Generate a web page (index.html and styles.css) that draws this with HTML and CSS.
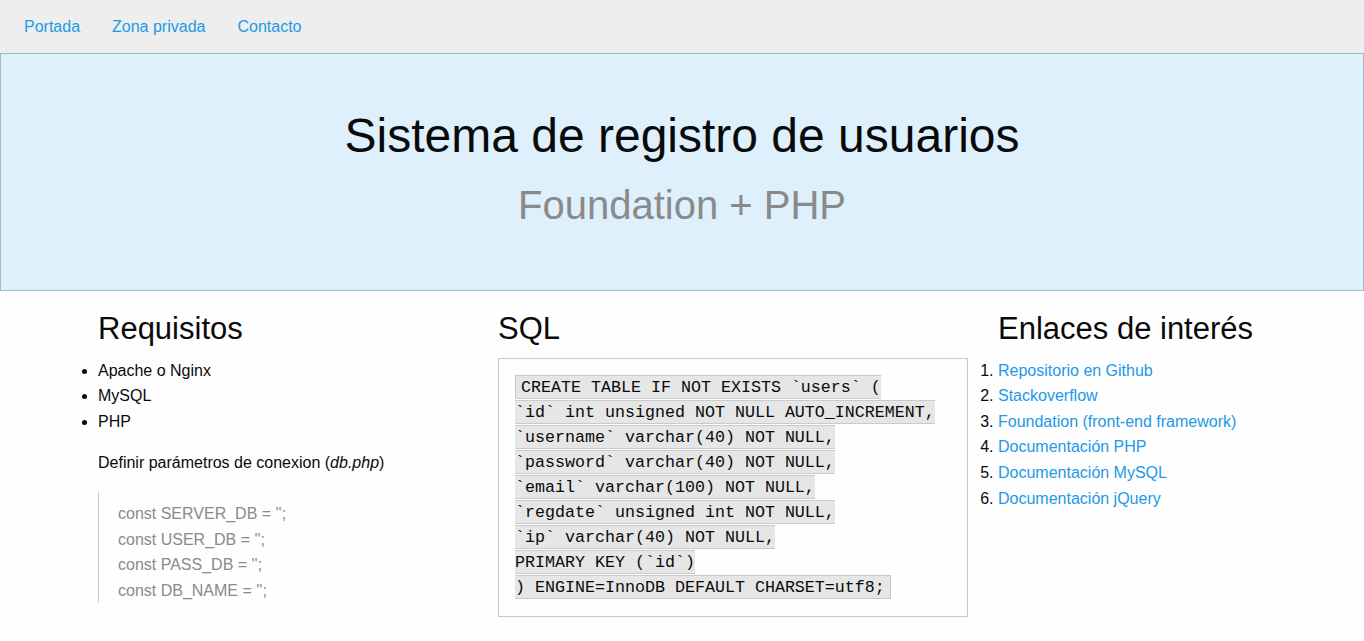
FILE: index.html
```html
<!DOCTYPE html>
<html lang="es">
<head>
<meta charset="utf-8">
<title>Sistema de registro de usuarios</title>
<link rel="stylesheet" href="styles.css">
</head>
<body>
<div class="top-bar">
  <ul class="menu">
    <li><a href="#">Portada</a></li>
    <li><a href="#">Zona privada</a></li>
    <li><a href="#">Contacto</a></li>
  </ul>
</div>
<div class="callout">
  <h1>Sistema de registro de usuarios</h1>
  <h2 class="subheader">Foundation + PHP</h2>
</div>
<div class="row">
  <div class="col col-4">
    <h3>Requisitos</h3>
    <ul class="plain">
      <li>Apache o Nginx</li>
      <li>MySQL</li>
      <li>PHP</li>
    </ul>
    <p>Definir parámetros de conexion (<em>db.php</em>)</p>
    <blockquote><p>const SERVER_DB = '';<br>const USER_DB = '';<br>const PASS_DB = '';<br>const DB_NAME = '';</p></blockquote>
  </div>
  <div class="col col-5">
    <h3>SQL</h3>
    <div class="sqlbox"><code>CREATE TABLE IF NOT EXISTS `users` (
`id` int unsigned NOT NULL AUTO_INCREMENT,
`username` varchar(40) NOT NULL,
`password` varchar(40) NOT NULL,
`email` varchar(100) NOT NULL,
`regdate` unsigned int NOT NULL,
`ip` varchar(40) NOT NULL,
PRIMARY KEY (`id`)
) ENGINE=InnoDB DEFAULT CHARSET=utf8;</code></div>
  </div>
  <div class="col col-3">
    <h3>Enlaces de interés</h3>
    <ol class="plain">
      <li><a href="#">Repositorio en Github</a></li>
      <li><a href="#">Stackoverflow</a></li>
      <li><a href="#">Foundation (front-end framework)</a></li>
      <li><a href="#">Documentación PHP</a></li>
      <li><a href="#">Documentación MySQL</a></li>
      <li><a href="#">Documentación jQuery</a></li>
    </ol>
  </div>
</div>
</body>
</html>
```

FILE: styles.css
```css
* { box-sizing: border-box; }
html, body {
  margin: 0;
  padding: 0;
  background: #fefefe;
  color: #0a0a0a;
  font-family: "Liberation Sans", Arial, sans-serif;
  font-size: 16px;
  line-height: 1.5;
}
a { color: #2199e8; text-decoration: none; }

.top-bar {
  background: #eeeeee;
  padding: 8px;
}
.menu {
  display: flex;
  list-style: none;
  margin: 0;
  padding: 0;
}
.menu a {
  display: block;
  line-height: 1;
  padding: 10.5px 16px;
}

.callout {
  background: #def0fc;
  border: 1px solid rgba(10, 10, 10, 0.25);
  padding: 48px 16px 49px;
  margin: 0 0 15.5px;
  text-align: center;
}
h1, h2, h3 {
  font-weight: normal;
  line-height: 1.4;
  margin: 0 0 8px;
}
h1 { font-size: 48px; }
h2 { font-size: 40px; }
.subheader { color: #8a8a8a; margin: 0 0 8px; }
h3 { font-size: 31px; margin-bottom: 7.5px; }

.row {
  max-width: 1200px;
  margin: 0 auto;
  display: flex;
}
.col { padding: 0 14px 0 16px; }
.col-4 { width: 400px; }
.col-5 { width: 500px; }
.col-3 { width: 300px; }

p { margin: 0 0 16px; line-height: 1.6; }
ul.plain, ol.plain {
  margin: 0 0 16px;
  padding: 0;
  line-height: 1.6;
  list-style-position: outside;
}

blockquote {
  margin: 0 0 16px;
  padding: 9px 20px 0 19px;
  border-left: 1px solid #cacaca;
}
blockquote p { color: #8a8a8a; margin: 0; }

.sqlbox {
  border: 1px solid #cacaca;
  padding: 16px;
  font-family: "Liberation Mono", Consolas, monospace;
  font-size: 16.67px;
  line-height: 25px;
  white-space: pre-wrap;
}
.sqlbox code {
  font-family: inherit;
  font-size: inherit;
  color: #0a0a0a;
  background: #e6e6e6;
  border: 1px solid #cacaca;
  padding: 2px 5px 1px;
}
```
